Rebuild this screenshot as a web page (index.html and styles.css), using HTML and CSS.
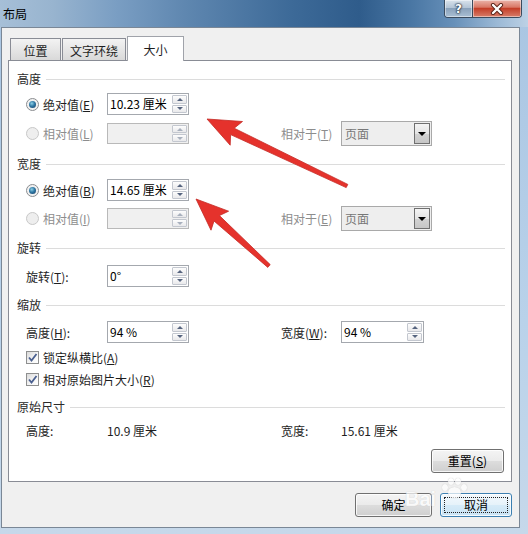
FILE: index.html
```html
<!DOCTYPE html>
<html lang="zh-CN">
<head>
<meta charset="utf-8">
<title>布局</title>
<link rel="stylesheet" href="styles.css">
</head>
<body>
<div class="window">
  <div class="titlebar">
    <span class="title">布局</span>
    <div class="caption">
      <div class="cbtn help">?</div>
      <div class="cbtn close"><svg width="16" height="12" viewBox="0 0 16 12"><path d="M4 2L12 10M12 2L4 10" stroke="#5a2218" stroke-width="4.2" stroke-linecap="round"/><path d="M4 2L12 10M12 2L4 10" stroke="#fff" stroke-width="2.4" stroke-linecap="round"/></svg></div>
    </div>
  </div>
  <div class="client">
    <div class="tabs">
      <div class="tab t1">位置</div>
      <div class="tab t2">文字环绕</div>
      <div class="tab t3 active">大小</div>
    </div>
    <div class="panel">
      <div class="group mt10"><span>高度</span><i class="rule"></i></div>
      <div class="row h22 mt6">
        <div class="opt"><span class="radio on"></span><span class="lbl">绝对值(<u>E</u>)</span></div>
        <div class="spin"><span class="val">10.23 厘米</span><span class="arrows"><span class="arr up"></span><span class="arr down"></span></span></div>
      </div>
      <div class="row h25 mt6">
        <div class="opt"><span class="radio dis"></span><span class="lbl dis">相对值(<u>L</u>)</span></div>
        <div class="spin dis"><span class="val"></span><span class="arrows"><span class="arr up"></span><span class="arr down"></span></span></div>
        <span></span>
        <span class="lbl dis">相对于(<u>T</u>)</span>
        <div class="combo"><span class="val">页面</span><span class="drop"></span></div>
      </div>

      <div class="group mt10"><span>宽度</span><i class="rule"></i></div>
      <div class="row h22 mt7">
        <div class="opt"><span class="radio on"></span><span class="lbl">绝对值(<u>B</u>)</span></div>
        <div class="spin"><span class="val">14.65 厘米</span><span class="arrows"><span class="arr up"></span><span class="arr down"></span></span></div>
      </div>
      <div class="row h25 mt5">
        <div class="opt"><span class="radio dis"></span><span class="lbl dis">相对值(<u>I</u>)</span></div>
        <div class="spin dis"><span class="val"></span><span class="arrows"><span class="arr up"></span><span class="arr down"></span></span></div>
        <span></span>
        <span class="lbl dis">相对于(<u>E</u>)</span>
        <div class="combo"><span class="val">页面</span><span class="drop"></span></div>
      </div>

      <div class="group mt9"><span>旋转</span><i class="rule"></i></div>
      <div class="row h22 mt9">
        <span class="lbl">旋转(<u>T</u>):</span>
        <div class="spin"><span class="val">0°</span><span class="arrows"><span class="arr up"></span><span class="arr down"></span></span></div>
      </div>

      <div class="group mt10"><span>缩放</span><i class="rule"></i></div>
      <div class="row h22 mt8">
        <span class="lbl">高度(<u>H</u>):</span>
        <div class="spin"><span class="val">94 %</span><span class="arrows"><span class="arr up"></span><span class="arr down"></span></span></div>
        <span></span>
        <span class="lbl">宽度(<u>W</u>):</span>
        <div class="spin narrow"><span class="val">94 %</span><span class="arrows"><span class="arr up"></span><span class="arr down"></span></span></div>
      </div>
      <div class="checkrow mt5">
        <span class="check"><svg width="11" height="11" viewBox="0 0 11 11"><path d="M2 5.5L4.5 8.5L9.5 2" fill="none" stroke="#4a5f8f" stroke-width="1.8"/></svg></span>
        <span class="lbl">锁定纵横比(<u>A</u>)</span>
      </div>
      <div class="checkrow mt4">
        <span class="check"><svg width="11" height="11" viewBox="0 0 11 11"><path d="M2 5.5L4.5 8.5L9.5 2" fill="none" stroke="#4a5f8f" stroke-width="1.8"/></svg></span>
        <span class="lbl">相对原始图片大小(<u>R</u>)</span>
      </div>

      <div class="group mt11"><span>原始尺寸</span><i class="rule"></i></div>
      <div class="row h18 mt6">
        <span class="lbl">高度:</span>
        <span class="lbl">10.9 厘米</span>
        <span></span>
        <span class="lbl">宽度:</span>
        <span class="lbl">15.61 厘米</span>
      </div>
      <div class="resetrow">
        <button class="btn reset">重置(<u>S</u>)</button>
      </div>
    </div>
    <div class="footer">
      <button class="btn ok">确定</button>
      <button class="btn cancel"><span class="focus">取消</span></button>
    </div>
  </div>

  <div class="watermark">
    <span class="wm-bai">Bai</span>
    <span class="wm-paw"><i></i><i></i><i></i><i></i><b></b></span>
  </div>

  <svg class="arrows-overlay" width="528" height="534" viewBox="0 0 528 534">
    <polygon points="207,119 242.5,121.5 234.2,128.2 347.8,184.4 346.2,187.6 230.6,134.6 230.2,145.2" fill="#e5322c" stroke="#c42a24" stroke-width="0.8" stroke-linejoin="round"/>
    <polygon points="196,199 228.6,211.2 219.4,215.6 270.2,264.6 267.8,267.4 214.0,221.0 211.0,230.2" fill="#e5322c" stroke="#c42a24" stroke-width="0.8" stroke-linejoin="round"/>
  </svg>
</div>
</body>
</html>
```

FILE: styles.css
```css
* { box-sizing: border-box; }
html, body { margin: 0; padding: 0; }
body {
  width: 528px;
  height: 534px;
  overflow: hidden;
  font-family: "Noto Sans CJK SC", "Noto Sans", sans-serif;
  font-size: 12px;
  color: #1e1e1e;
}
u { text-decoration: underline; text-underline-offset: 1px; }

.window {
  position: relative;
  width: 528px;
  height: 534px;
  background: linear-gradient(180deg, #a9c5e2 0%, #b9d2ea 60%, #c6d8ea 100%);
}

/* title bar */
.titlebar {
  height: 27px;
  display: flex;
  justify-content: space-between;
  align-items: flex-start;
  background: linear-gradient(90deg, #a6bfd7 0%, #98b4cf 10%, #7a9ec3 22%, #5f87b0 35%, #3d6a98 55%, #2f5c8b 68%, #4a77a4 78%, #6790b9 86%, #9ab8d5 94%, #bcd1e5 100%);
}
.title {
  margin: 5px 0 0 3px;
  line-height: 17px;
  font-size: 12px;
  color: #000;
}
.caption {
  display: flex;
  height: 18px;
  margin-right: 6px;
  border: 1px solid #3a4b5e;
  border-top: none;
  border-radius: 0 0 4px 4px;
  overflow: hidden;
}
.cbtn {
  display: flex;
  align-items: center;
  justify-content: center;
  box-shadow: inset 0 0 0 1px rgba(255,255,255,0.45);
}
.help {
  width: 28px;
  border-right: 1px solid #3a4b5e;
  background: linear-gradient(180deg, #d9e3ec 0%, #b4c5d6 45%, #8aa2bb 50%, #a9bfd4 100%);
  color: #fff;
  font-family: "DejaVu Sans", sans-serif;
  font-weight: bold;
  font-size: 12px;
  line-height: 16px;
  text-shadow: 0 0 1px #1c2a3a, 0 0 2px #1c2a3a, 0 0 2px #1c2a3a;
}
.close {
  width: 48px;
  background: linear-gradient(180deg, #ebb5ab 0%, #d97866 42%, #c43f29 50%, #d77d69 100%);
}

/* client area */
.client {
  margin-left: 1px;
  width: 519px;
  height: 501px;
  background: #f0f0f0;
  border: 1px solid #7a8796;
  display: flex;
  flex-direction: column;
}

.tabs {
  position: relative;
  z-index: 1;
  display: flex;
  align-items: flex-end;
  height: 25px;
  margin: 8px 0 0 6px;
}
.tab {
  height: 22px;
  margin-bottom: 1px;
  border: 1px solid #898c95;
  border-bottom: none;
  background: linear-gradient(180deg, #f3f3f3 0%, #e6e6e6 50%, #d9d9d9 100%);
  display: flex;
  align-items: center;
  justify-content: center;
  padding-top: 2px;
  line-height: 17px;
  color: #1e1e1e;
}
.t1 { width: 51px; margin-left: 2px; }
.t2 { width: 64px; margin-left: 1px; }
.t3 { width: 57px; margin-left: 1px; }
.tab.active {
  height: 25px;
  margin-bottom: 0;
  background: #ffffff;
  padding-top: 0;
  border-color: #a0a3aa;
}

.panel {
  margin: -1px 7px 0 6px;
  height: 422px;
  border: 1px solid #898c95;
  background: #ffffff;
  padding: 0 6px 0 8px;
}

.group {
  display: flex;
  align-items: center;
  height: 16px;
  line-height: 16px;
  color: #2a2a2a;
}
.group .rule {
  flex: 1;
  height: 1px;
  margin-left: 5px;
  background: #dcdcdc;
}

.mt4 { margin-top: 4px; }
.mt5 { margin-top: 5px; }
.mt6 { margin-top: 6px; }
.mt7 { margin-top: 7px; }
.mt8 { margin-top: 8px; }
.mt9 { margin-top: 9px; }
.mt10 { margin-top: 10px; }
.mt11 { margin-top: 11px; }

.row {
  display: grid;
  grid-template-columns: 81px 82px 92px 60px 91px;
  align-items: center;
  padding-left: 9px;
}
.h18 { height: 18px; }
.h22 { height: 22px; }
.h25 { height: 25px; }

.opt { display: flex; align-items: center; }
.opt .lbl { margin-left: 4px; }

.lbl {
  line-height: 17px;
  white-space: nowrap;
  color: #1e1e1e;
}
.lbl.dis { color: #8d8d8d; }

.radio {
  flex: none;
  width: 13px;
  height: 13px;
  border-radius: 50%;
  border: 1px solid #8a8c8f;
  background: radial-gradient(circle at 50% 50%, #e4e4e4 0%, #fafafa 100%);
  display: flex;
  align-items: center;
  justify-content: center;
}
.radio.on::after {
  content: "";
  width: 7px;
  height: 7px;
  border-radius: 50%;
  background: radial-gradient(circle at 40% 35%, #8ed0e6 0%, #2f78a4 45%, #163b63 100%);
}
.radio.dis {
  border-color: #c8c8c8;
  background: #eeeeee;
}

.spin {
  display: flex;
  height: 22px;
  border: 1px solid #a4a8ae;
  background: #ffffff;
}
.h25 .spin { height: 21px; }
.spin.narrow { width: 83px; }
.spin .val {
  flex: 1;
  padding-left: 2px;
  line-height: 20px;
  color: #000;
  white-space: nowrap;
}
.spin.dis {
  background: #f0f0f0;
  border-color: #b9b9b9;
}
.arrows {
  width: 16px;
  display: flex;
  flex-direction: column;
  gap: 1px;
  padding: 1px 1px 1px 0;
}
.arr {
  flex: 1;
  border: 1px solid #c3c7cf;
  border-radius: 1px;
  background: linear-gradient(180deg, #fdfdfd 0%, #e9e9eb 100%);
  display: flex;
  align-items: center;
  justify-content: center;
}
.arr::after {
  content: "";
  width: 0;
  height: 0;
  border-left: 3px solid transparent;
  border-right: 3px solid transparent;
}
.up::after { border-bottom: 3px solid #56647f; }
.down::after { border-top: 3px solid #56647f; }
.spin.dis .up::after { border-bottom-color: #a8b0bd; }
.spin.dis .down::after { border-top-color: #a8b0bd; }

.combo {
  display: flex;
  height: 25px;
  border: 1px solid #a9a9a9;
  background: #eeeeee;
  padding: 1px;
}
.combo .val {
  flex: 1;
  padding-left: 2px;
  line-height: 21px;
  color: #777777;
}
.combo .drop {
  width: 16px;
  border: 1px solid #6f6f6f;
  background: linear-gradient(180deg, #f4f4f4 0%, #e4e4e4 50%, #d2d2d2 52%, #c6c6c6 100%);
  display: flex;
  align-items: center;
  justify-content: center;
}
.combo .drop::after {
  content: "";
  width: 0;
  height: 0;
  border-left: 4px solid transparent;
  border-right: 4px solid transparent;
  border-top: 4px solid #000;
}

.checkrow {
  display: flex;
  align-items: center;
  height: 18px;
  padding-left: 9px;
}
.checkrow .lbl { margin-left: 4px; }
.check {
  flex: none;
  width: 13px;
  height: 13px;
  border: 1px solid #8e8f8f;
  background: linear-gradient(135deg, #dadada 0%, #f6f6f6 60%, #ffffff 100%);
  display: flex;
  align-items: center;
  justify-content: center;
}

.resetrow {
  display: flex;
  justify-content: flex-end;
  margin-top: 10px;
  padding-right: 1px;
}

.btn {
  height: 24px;
  border: 1px solid #707070;
  border-radius: 3px;
  background: linear-gradient(180deg, #f4f4f4 0%, #ebebeb 48%, #dddddd 50%, #cfcfcf 100%);
  box-shadow: inset 0 0 0 1px rgba(255,255,255,0.8);
  font-family: "Noto Sans CJK SC", "Noto Sans", sans-serif;
  font-size: 12px;
  color: #000;
  padding: 0;
  line-height: 20px;
  display: flex;
  align-items: center;
  justify-content: center;
}
.reset { width: 73px; }

.footer {
  display: flex;
  justify-content: flex-end;
  gap: 8px;
  margin-top: 11px;
  padding-right: 7px;
}
.ok { width: 77px; }
.cancel {
  width: 72px;
  border-color: #3c7fb1;
  background: linear-gradient(180deg, #f3f9fd 0%, #e6f2fa 48%, #d6ebf8 50%, #c9e3f5 100%);
  padding: 3px;
}
.cancel .focus {
  flex: 1;
  align-self: stretch;
  border: 1px dotted #202020;
  display: flex;
  align-items: center;
  justify-content: center;
  line-height: 16px;
}

/* watermark */
.watermark {
  position: absolute;
  left: 405px;
  top: 477px;
  width: 64px;
  height: 40px;
  pointer-events: none;
  opacity: 0.7;
}
.wm-bai {
  position: absolute;
  left: 0;
  top: 11px;
  font-family: "Liberation Sans", sans-serif;
  font-weight: bold;
  font-size: 20px;
  line-height: 22px;
  color: #ffffff;
  text-shadow: 0 0 1px #b9b9b9;
}
.wm-paw {
  position: absolute;
  left: 37px;
  top: 0;
  width: 24px;
  height: 22px;
}
.wm-paw i {
  position: absolute;
  width: 6px;
  height: 7px;
  border-radius: 50%;
  background: #ffffff;
  box-shadow: 0 0 1px #aaa;
}
.wm-paw i:nth-child(1) { left: 0; top: 7px; }
.wm-paw i:nth-child(2) { left: 6px; top: 1px; }
.wm-paw i:nth-child(3) { left: 13px; top: 1px; }
.wm-paw i:nth-child(4) { left: 19px; top: 7px; }
.wm-paw b {
  position: absolute;
  left: 6px;
  top: 10px;
  width: 13px;
  height: 11px;
  border-radius: 50%;
  background: #ffffff;
  box-shadow: 0 0 1px #aaa;
}

.arrows-overlay {
  position: absolute;
  left: 0;
  top: 0;
  pointer-events: none;
}
```
